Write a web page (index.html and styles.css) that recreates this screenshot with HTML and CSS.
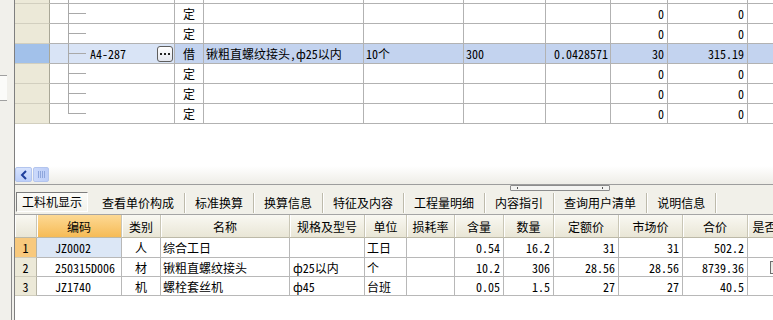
FILE: index.html
```html
<!DOCTYPE html>
<html lang="zh-CN">
<head>
<meta charset="utf-8">
<title>工料机显示</title>
<link rel="stylesheet" href="styles.css">
</head>
<body>
<div class="app">
  <div class="side">
    <div class="side-gap"></div>
    <div class="side-box"></div>
    <div class="side-line"></div>
  </div>
  <div class="main">
    <div class="top-pane">
      <div class="tgrid">
        <div class="trow partial">
          <div class="c ind"></div><div class="c tree"></div><div class="c"></div><div class="c"></div><div class="c"></div><div class="c"></div><div class="c"></div><div class="c"></div><div class="c"></div><div class="c"></div>
        </div>
        <div class="trow">
          <div class="c ind"></div><div class="c tree"></div><div class="c ctr">定</div><div class="c"></div><div class="c"></div><div class="c"></div><div class="c"></div><div class="c r3">0</div><div class="c r3">0</div><div class="c"></div>
        </div>
        <div class="trow">
          <div class="c ind"></div><div class="c tree"></div><div class="c ctr">定</div><div class="c"></div><div class="c"></div><div class="c"></div><div class="c"></div><div class="c r3">0</div><div class="c r3">0</div><div class="c"></div>
        </div>
        <div class="trow sel">
          <div class="c ind"></div>
          <div class="c tree code"><span>A4-287</span><span class="dots"><svg width="14" height="14" viewBox="0 0 14 14"><rect x="2" y="6" width="2" height="2" fill="#222"/><rect x="6" y="6" width="2" height="2" fill="#222"/><rect x="10" y="6" width="2" height="2" fill="#222"/></svg></span></div>
          <div class="c ctr">借</div>
          <div class="c l2">锹粗直螺纹接头,ф25以内</div>
          <div class="c l2">10个</div>
          <div class="c l2">300</div>
          <div class="c r2">0.0428571</div>
          <div class="c r3">30</div>
          <div class="c r3">315.19</div>
          <div class="c"></div>
        </div>
        <div class="trow">
          <div class="c ind"></div><div class="c tree"></div><div class="c ctr">定</div><div class="c"></div><div class="c"></div><div class="c"></div><div class="c"></div><div class="c r3">0</div><div class="c r3">0</div><div class="c"></div>
        </div>
        <div class="trow">
          <div class="c ind"></div><div class="c tree"></div><div class="c ctr">定</div><div class="c"></div><div class="c"></div><div class="c"></div><div class="c"></div><div class="c r3">0</div><div class="c r3">0</div><div class="c"></div>
        </div>
        <div class="trow">
          <div class="c ind"></div><div class="c tree last"></div><div class="c ctr">定</div><div class="c"></div><div class="c"></div><div class="c"></div><div class="c"></div><div class="c r3">0</div><div class="c r3">0</div><div class="c"></div>
        </div>
      </div>
      <div class="fill"></div>
      <div class="hscroll">
        <div class="sb-btn"><svg width="8" height="10" viewBox="0 0 8 10"><path d="M6 1 L2 5 L6 9" fill="none" stroke="#1f3f9c" stroke-width="2"/></svg></div>
        <div class="sb-thumb"><span class="grip-lines"></span></div>
      </div>
    </div>
    <div class="splitter"><div class="grip"></div></div>
    <div class="tabs">
      <div class="tab active">工料机显示</div>
      <div class="tab">查看单价构成</div>
      <div class="tab">标准换算</div>
      <div class="tab">换算信息</div>
      <div class="tab">特征及内容</div>
      <div class="tab">工程量明细</div>
      <div class="tab">内容指引</div>
      <div class="tab">查询用户清单</div>
      <div class="tab">说明信息</div>
    </div>
    <div class="bgrid">
      <div class="brow head">
        <div class="h"></div><div class="h sort">编码</div><div class="h">类别</div><div class="h">名称</div><div class="h">规格及型号</div><div class="h">单位</div><div class="h">损耗率</div><div class="h">含量</div><div class="h">数量</div><div class="h">定额价</div><div class="h">市场价</div><div class="h">合价</div><div class="h">是否暂估</div>
      </div>
      <div class="brow">
        <div class="d bind cur">1</div><div class="d code2 curcell">JZ0002</div><div class="d ctr">人</div><div class="d l2">综合工日</div><div class="d l3"></div><div class="d l2">工日</div><div class="d"></div><div class="d r3">0.54</div><div class="d r3">16.2</div><div class="d r3">31</div><div class="d r3">31</div><div class="d r3">502.2</div><div class="d ctr"></div>
      </div>
      <div class="brow">
        <div class="d bind">2</div><div class="d code2">250315D006</div><div class="d ctr">材</div><div class="d l2">锹粗直螺纹接头</div><div class="d l3">ф25以内</div><div class="d l2">个</div><div class="d"></div><div class="d r3">10.2</div><div class="d r3">306</div><div class="d r3">28.56</div><div class="d r3">28.56</div><div class="d r3">8739.36</div><div class="d ctr"><span class="chk"></span></div>
      </div>
      <div class="brow">
        <div class="d bind">3</div><div class="d code2">JZ1740</div><div class="d ctr">机</div><div class="d l2">螺栓套丝机</div><div class="d l3">ф45</div><div class="d l2">台班</div><div class="d"></div><div class="d r3">0.05</div><div class="d r3">1.5</div><div class="d r3">27</div><div class="d r3">27</div><div class="d r3">40.5</div><div class="d ctr"></div>
      </div>
    </div>
  </div>
</div>
</body>
</html>
```

FILE: styles.css
```css
* { box-sizing: border-box; }
html, body { margin: 0; padding: 0; }
body {
  width: 773px;
  height: 320px;
  overflow: hidden;
  background: #fff;
  color: #000;
  font-family: "Noto Sans Mono CJK SC", "Noto Sans CJK SC", sans-serif;
  font-size: 12px;
}
.app { display: flex; height: 320px; }

/* left strip */
.side {
  width: 15px;
  flex: none;
  background: #f1f0eb;
  border-right: 1px solid #7f7f7f;
  display: flex;
  flex-direction: column;
}
.side-gap { height: 75px; }
.side-box {
  width: 7px;
  height: 26px;
  background: #fbfbf9;
  border-top: 1px solid #a0a0a0;
  border-bottom: 1px solid #a0a0a0;
}
.side-line {
  margin-top: auto;
  width: 12px;
  height: 73px;
  border-right: 1px solid #8a8a8a;
}

.main {
  flex: 1;
  min-width: 0;
  overflow: hidden;
  display: flex;
  flex-direction: column;
}

/* top grid */
.top-pane {
  height: 185px;
  flex: none;
  display: flex;
  flex-direction: column;
  border-bottom: 1px solid #9d9d9d;
}
.trow {
  display: grid;
  grid-template-columns: 35px 125px 29px 160px 100px 82px 65px 57px 80px 60px;
  height: 20px;
}
.trow.partial { height: 4px; }
.c {
  border-right: 1px solid #b2b2b2;
  border-bottom: 1px solid #b2b2b2;
  display: flex;
  align-items: center;
  white-space: nowrap;
  overflow: hidden;
  line-height: 16px;
}
.c.ind {
  background: #ece9d8;
  border-right-color: #a9a797;
  border-bottom-color: #d2cfbf;
}
.c.ctr { justify-content: center; }
.c.l2 { padding-left: 2px; }
.c.r2 { justify-content: flex-end; padding-right: 2px; }
.c.r3 { justify-content: flex-end; padding-right: 3px; }
.tree {
  background-image: linear-gradient(#a9a9a9, #a9a9a9), linear-gradient(#a9a9a9, #a9a9a9);
  background-repeat: no-repeat;
  background-size: 1px 100%, 18px 1px;
  background-position: 18px 0, 18px 9px;
}
.partial .tree { background-size: 1px 100%, 0 0; }
.tree.last { background-size: 1px 10px, 18px 1px; }
.tree.code { padding-left: 40px; padding-right: 1px; }
.dots {
  margin-left: auto;
  width: 16px;
  height: 16px;
  border: 1px solid #5e5e5e;
  border-radius: 3px;
  background: linear-gradient(#ffffff, #e3e6ee);
  display: flex;
  align-items: center;
  justify-content: center;
}
.trow.sel .c { background-color: #c3d3ef; }
.trow.sel .c.ind { background-color: #a2c1ea; }
.trow.sel .c.tree { background-color: #d9e4f6; }

.fill { flex: 1; }
.hscroll {
  height: 18px;
  flex: none;
  display: flex;
  align-items: flex-start;
  padding-top: 1px;
  background: linear-gradient(#ffffff, #eeede7);
}
.sb-btn {
  width: 17px;
  height: 15px;
  border: 1px solid #b3c5ee;
  border-radius: 2px;
  background: linear-gradient(#d6e2fd, #bccffa);
  display: flex;
  align-items: center;
  justify-content: center;
}
.sb-thumb {
  width: 16px;
  height: 15px;
  margin-left: 1px;
  border: 1px solid #b3c5ee;
  border-radius: 2px;
  background: linear-gradient(90deg, #cbd9fb, #bccdf7);
  display: flex;
  align-items: center;
  justify-content: center;
}
.grip-lines {
  width: 7px;
  height: 7px;
  background: repeating-linear-gradient(90deg, #8ea6dc 0 1px, transparent 1px 2px);
}

/* splitter */
.splitter {
  height: 6px;
  flex: none;
  background: #f1f0e9;
}
.grip {
  margin-left: 495px;
  width: 100px;
  height: 6px;
  border: 1px solid #8c8c8c;
  border-radius: 1px;
  background:
    linear-gradient(#555, #555) 6px 1px / 1px 2px no-repeat,
    linear-gradient(#555, #555) 91px 1px / 1px 2px no-repeat,
    #f4f4f2;
}

/* tabs */
.tabs {
  height: 23px;
  flex: none;
  display: flex;
  align-items: flex-start;
  padding-top: 1px;
  background: #f1f0e9;
  white-space: nowrap;
}
.tab {
  height: 20px;
  margin-top: 1px;
  padding: 0 10px;
  line-height: 20px;
  border-right: 1px solid #bdbaab;
  box-shadow: 1px 0 0 #ffffff;
  color: #000;
}
.tab.active {
  margin-left: 1px;
  margin-right: 4px;
  margin-top: 0;
  height: 20px;
  padding: 0 5px;
  line-height: 18px;
  border: 1px solid #fff;
  border-top-color: #7d7d7d;
  border-left-color: #7d7d7d;
  box-shadow: none;
  background: linear-gradient(#fbfbf8, #f3f2ec);
}

/* bottom grid */
.bgrid {
  flex: 1;
  border-top: 1px solid #a5a5a5;
  background: #fff;
}
.brow {
  display: grid;
  grid-template-columns: 22px 85px 39px 129px 75px 42px 48px 49px 50px 65px 64px 65px 58px;
  height: 20px;
}
.brow + .brow { height: 19px; }
.brow.head + .brow { height: 20px; }
.brow.head { height: 23px; }
.h {
  display: flex;
  align-items: center;
  justify-content: center;
  white-space: nowrap;
  overflow: hidden;
  background: linear-gradient(#f9f8f2, #e9e6d6);
  border-right: 1px solid #c9c6b6;
  border-bottom: 1px solid #bcb9a8;
  box-shadow: inset 1px 0 0 #ffffff;
}
.h.sort { background: linear-gradient(#fdd994, #f6bb56); }
.d {
  display: flex;
  align-items: center;
  white-space: nowrap;
  overflow: hidden;
  border-right: 1px solid #b8b8b8;
  border-bottom: 1px solid #b8b8b8;
}
.d.bind {
  justify-content: center;
  background: #ece9d8;
  border-right-color: #b6b3a3;
  border-bottom-color: #cfccbc;
}
.d.bind.cur { background: #f8c97d; }
.d.curcell { background: #dce7f6; }
.d.code2 { padding-left: 18px; }
.d.ctr { justify-content: center; }
.d.l2 { padding-left: 2px; }
.d.l3 { padding-left: 3px; }
.d.r3 { justify-content: flex-end; padding-right: 3px; }
.chk {
  width: 13px;
  height: 13px;
  border: 1px solid #6f6f6f;
  background: linear-gradient(135deg, #e6e6e0, #ffffff);
}
```
